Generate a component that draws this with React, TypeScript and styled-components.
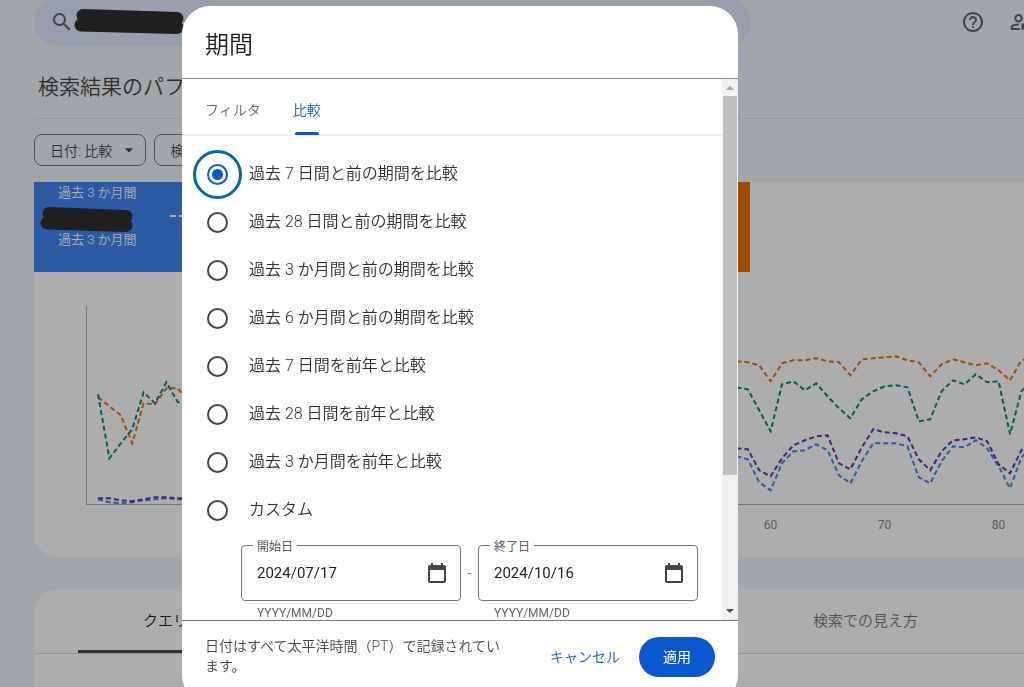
import React, { useState } from "react";
import styled, { createGlobalStyle } from "styled-components";
import { MdArrowDropDown, MdHelpOutline, MdSearch } from "react-icons/md";

const fontStack = `Roboto, "Noto Sans CJK JP", sans-serif`;

const GlobalStyle = createGlobalStyle`
  *, *::before, *::after { box-sizing: border-box; }
  body {
    margin: 0;
    background: #eff5f9;
    color: #1f1f1f;
    font-family: ${fontStack};
    font-weight: 350;
    overflow: hidden;
  }
  button, input { font: inherit; color: inherit; }
  h1, h2, p { margin: 0; font-weight: inherit; }
`;

/* ---------- Report page ---------- */

const Page = styled.div`
  height: 100vh;
  padding-left: 34px;
  overflow: hidden;
`;

const Header = styled.header`
  display: flex;
  justify-content: space-between;
  align-items: center;
  height: 48px;
  margin: -2px -8px 0 0;
`;

const SearchBar = styled.div`
  display: flex;
  align-items: center;
  width: 717px;
  height: 48px;
  padding-left: 16px;
  border-radius: 24px;
  background: #e1e9ff;
  color: #5f6368;
`;

const HeaderActions = styled.div`
  display: flex;
  gap: 23px;
`;

const IconButton = styled.button`
  display: flex;
  padding: 0;
  border: 0;
  background: none;
  color: #5f6368;
`;

const Title = styled.h1`
  height: 73px;
  padding: 25px 0 0 4px;
  border-bottom: 1px solid #dfe3e6;
  font-size: 21px;
  line-height: 32px;
  white-space: nowrap;
  color: #444746;
`;

const Chips = styled.div`
  display: flex;
  gap: 8px;
  padding: 15px 0 16px;
`;

const Chip = styled.button`
  display: flex;
  align-items: center;
  gap: 7px;
  height: 32px;
  padding: 0 6px 0 15px;
  border: 1px solid #747775;
  border-radius: 8px;
  background: none;
  font-size: 14px;
  white-space: nowrap;
  color: #444746;
`;

const ReportCard = styled.section`
  height: 375px;
  border-bottom-left-radius: 24px;
  background: #fff;
  overflow: hidden;
`;

const Metrics = styled.div`
  display: grid;
  grid-template-columns: repeat(4, 179px);
  height: 90px;
`;

const Metric = styled.div<{ $color: string }>`
  display: flex;
  align-items: flex-start;
  justify-content: space-between;
  padding: 0 19px 0 6px;
  background: ${(p) => p.$color};
  color: #fff;
  font-size: 13px;
  line-height: 20px;
`;

const MetricLabels = styled.div`
  display: flex;
  flex-direction: column;

  svg { margin-top: 4px; }
  span { padding-left: 18px; margin-top: 1px; }
  svg + span { margin-top: -4px; }
`;

const LegendDash = styled.span`
  width: 24px;
  margin-top: 33px;
  border-top: 2px dashed #fff;
`;

const DimensionCard = styled.section`
  height: 240px;
  margin-top: 32px;
  border-top-left-radius: 24px;
  background: #fff;
`;

const DimensionTabs = styled.div`
  display: grid;
  grid-template-columns: repeat(6, 175px);
  height: 65px;
  padding-left: 44px;
  border-bottom: 1px solid #dadce0;
  overflow: hidden;
`;

const DimensionTab = styled.button<{ $column: number; $active?: boolean }>`
  grid-column: ${(p) => p.$column};
  padding: 0;
  border: 0;
  border-bottom: 3px solid ${(p) => (p.$active ? "#444746" : "transparent")};
  background: none;
  font-size: 15px;
  color: ${(p) => (p.$active ? "#1f1f1f" : "#747775")};
`;

/* ---------- Dialog ---------- */

const Scrim = styled.div`
  position: fixed;
  inset: 0;
  display: flex;
  justify-content: center;
  align-items: flex-start;
  padding: 6px 104px 0 0;
  background: rgba(0, 0, 0, 0.32);
  overflow: hidden;
`;

const Dialog = styled.div`
  flex: none;
  width: 556px;
  max-width: 100%;
  border-radius: 28px;
  background: #fff;
  overflow: hidden;
`;

const DialogTitle = styled.h2`
  padding: 23px 23px 17px;
  border-bottom: 1px solid #8a8d8c;
  font-size: 24px;
  line-height: 32px;
  color: #1f1f1f;
`;

const DialogBody = styled.div`
  display: flex;
  height: 541px;
`;

const BodyContent = styled.div`
  flex: 1;
  min-width: 0;
  overflow: hidden;
`;

const Tabs = styled.div`
  display: flex;
  gap: 32px;
  height: 57px;
  padding: 0 23px;
  border-bottom: 2px solid #f1f1f1;
`;

const Tab = styled.button<{ $active?: boolean }>`
  display: flex;
  flex-direction: column;
  align-items: center;
  justify-content: space-between;
  height: 56px;
  padding: 19px 0 0;
  border: 0;
  background: none;
  font-size: 14px;
  line-height: 24px;
  color: ${(p) => (p.$active ? "#0b57d0" : "#5f6368")};

  &::after {
    content: "";
    width: 24px;
    height: 3px;
    border-radius: 2px 2px 0 0;
    background: ${(p) => (p.$active ? "#0b57d0" : "transparent")};
  }
`;

const Options = styled.div`
  display: flex;
  flex-direction: column;
  padding: 14px 0 0 11px;
`;

const Option = styled.label`
  display: flex;
  align-items: center;
  gap: 7px;
  height: 48px;
  font-size: 16px;
  line-height: 24px;
  color: #303030;
`;

const RadioHalo = styled.span<{ $on: boolean }>`
  display: flex;
  flex: none;
  align-items: center;
  justify-content: center;
  width: 49px;
  height: 49px;
  border: 3px solid ${(p) => (p.$on ? "#0668a1" : "transparent")};
  border-radius: 50%;
`;

const Radio = styled.input`
  display: flex;
  align-items: center;
  justify-content: center;
  appearance: none;
  width: 21px;
  height: 21px;
  margin: 0;
  border: 2px solid #444746;
  border-radius: 50%;
  outline: none;

  &:checked { border-color: #0b57d0; }
  &:checked::before {
    content: "";
    width: 11px;
    height: 11px;
    border-radius: 50%;
    background: #0b57d0;
  }
`;

const DateRange = styled.div`
  display: flex;
  padding: 11px 24px 0 59px;
  font-size: 14px;
  color: #444746;
`;

const RangeDash = styled.span`
  flex: 0 0 17px;
  line-height: 56px;
  text-align: center;
`;

const DateField = styled.div`
  position: relative;
  flex: none;
  width: 220px;
`;

const DateLabel = styled.label`
  position: absolute;
  top: -8px;
  left: 12px;
  padding: 0 4px;
  background: #fff;
  font-size: 12px;
  line-height: 20px;
`;

const DateBox = styled.div`
  display: flex;
  align-items: center;
  height: 56px;
  padding: 0 11px 0 15px;
  border: 1px solid #747775;
  border-radius: 4px;
`;

const DateInput = styled.input`
  flex: 1;
  min-width: 0;
  padding: 0;
  border: 0;
  outline: 0;
  background: none;
  font-size: 15px;
  font-weight: 400;
  color: #1f1f1f;
`;

const Hint = styled.p`
  padding: 4px 16px 0;
  font-size: 12px;
  line-height: 16px;
  font-weight: 400;
  color: #5f6368;
`;

const Scrollbar = styled.div`
  display: flex;
  flex-direction: column;
  align-items: center;
  flex: none;
  width: 16px;
  background: #f1f1f1;
`;

const ScrollArrow = styled.svg`
  flex: none;
  width: 16px;
  height: 17px;
`;

const Thumb = styled.div`
  width: 14px;
  height: 70%;
  margin-bottom: auto;
  background: #c1c1c1;
`;

const DialogFooter = styled.footer`
  display: flex;
  align-items: flex-start;
  padding: 16px 23px 26px;
  border-top: 1px solid #747775;
`;

const Note = styled.p`
  flex: 1;
  margin-top: -1px;
  padding-right: 20px;
  font-size: 14px;
  line-height: 20px;
  color: #444746;
`;

const FooterButton = styled.button<{ $filled?: boolean }>`
  height: 40px;
  padding: 0 ${(p) => (p.$filled ? 24 : 19)}px 2px;
  border: 0;
  border-radius: 20px;
  background: ${(p) => (p.$filled ? "#0b57d0" : "none")};
  color: ${(p) => (p.$filled ? "#fff" : "#0b57d0")};
  font-size: 14px;
  font-weight: ${(p) => (p.$filled ? 400 : 350)};
  white-space: nowrap;
`;

/* ---------- Chart data: y position per day ---------- */

type Run = { from: number; y: number[] };
type Series = { color: string; runs: Run[] };

const series: Series[] = [
  {
    color: "#e8710a",
    runs: [
      { from: 1, y: [397, 406, 415, 443, 403, 404, 388, 388, 402] },
      {
        from: 57,
        y: [361, 362, 365, 381, 363, 360, 360, 358, 361, 362, 375, 359, 358, 357, 356, 360, 362, 376, 364, 359, 362, 365, 363, 370, 380, 360, 358],
      },
    ],
  },
  {
    color: "#00897b",
    runs: [
      { from: 1, y: [394, 458, 443, 429, 392, 403, 382, 402, 401] },
      {
        from: 57,
        y: [387, 389, 410, 431, 384, 381, 390, 383, 396, 408, 418, 399, 391, 386, 385, 387, 421, 419, 391, 380, 384, 374, 382, 381, 434, 391, 380],
      },
    ],
  },
  {
    color: "#4285f4",
    runs: [
      { from: 1, y: [499, 502, 503, 502, 500, 499, 498, 499, 499] },
      {
        from: 57,
        y: [456, 459, 482, 490, 463, 451, 450, 444, 450, 475, 483, 461, 443, 443, 443, 446, 477, 483, 461, 446, 447, 440, 448, 466, 488, 457, 446],
      },
    ],
  },
  {
    color: "#5e35b1",
    runs: [
      { from: 1, y: [498, 498, 500, 501, 499, 497, 497, 498, 498] },
      {
        from: 57,
        y: [448, 449, 470, 476, 458, 445, 440, 436, 435, 463, 469, 447, 429, 432, 433, 436, 459, 470, 451, 440, 439, 437, 441, 464, 473, 450, 440],
      },
    ],
  },
];

const dayX = (day: number) => 98 + (day - 1) * 11.4;
const toPoints = (run: Run) =>
  run.y.map((y, i) => `${dayX(run.from + i).toFixed(1)},${y + 0.3}`).join(" ");

const Chart = () => (
  <svg width="1016" height="285" viewBox="34 272 1016 285" aria-hidden="true">
    <path d="M86.5 306V505" fill="none" stroke="#b0b0b0" />
    <path d="M86 504.5H1050" fill="none" stroke="#b0b0b0" />
    {series.map((s) =>
      s.runs.map((run) => (
        <polyline
          key={s.color + run.from}
          points={toPoints(run)}
          fill="none"
          stroke={s.color}
          strokeWidth="2"
          strokeDasharray="5 3"
        />
      ))
    )}
    {[60, 70, 80].map((day) => (
      <text
        key={day}
        x={dayX(day)}
        y="529"
        textAnchor="middle"
        fontFamily="Roboto, sans-serif"
        fontSize="12"
        fontWeight="400"
        fill="#80868b"
      >
        {day}
      </text>
    ))}
  </svg>
);

const CalendarIcon = () => (
  <svg width="24" height="24" viewBox="0 0 24 24" fill="#444746" aria-hidden="true">
    <path d="M19 4h-1V2h-2v2H8V2H6v2H5c-1.11 0-1.99.9-1.99 2L3 20c0 1.1.89 2 2 2h14c1.1 0 2-.9 2-2V6c0-1.1-.9-2-2-2zm0 16H5V9h14v11z" />
  </svg>
);

const UserSettingsIcon = () => (
  <svg width="24" height="24" viewBox="0 0 24 24" fill="none" stroke="currentColor" strokeWidth="2" aria-hidden="true">
    <circle cx="10.5" cy="8.3" r="3.2" />
    <path d="M12 19H3.7v-1.6c0-1.8 3-2.9 7-2.9" />
    <path d="M13.5 13.5h6v6h-6z" fill="currentColor" stroke="none" />
  </svg>
);

const Redaction = ({ width }: { width: number }) => (
  <svg width={width} height="27" viewBox={`0 0 ${width} 27`} aria-hidden="true">
    <path
      d={`M9 6.5L${width - 8} 9.5M7 16L${width - 8} 18.5`}
      stroke="#2f2f2f"
      strokeWidth="13"
      strokeLinecap="round"
    />
  </svg>
);

const options = [
  "過去 7 日間と前の期間を比較",
  "過去 28 日間と前の期間を比較",
  "過去 3 か月間と前の期間を比較",
  "過去 6 か月間と前の期間を比較",
  "過去 7 日間を前年と比較",
  "過去 28 日間を前年と比較",
  "過去 3 か月間を前年と比較",
  "カスタム",
];

const DateInputField = ({ id, label, value }: { id: string; label: string; value: string }) => (
  <DateField>
    <DateBox>
      <DateInput id={id} defaultValue={value} />
      <CalendarIcon />
    </DateBox>
    <DateLabel htmlFor={id}>{label}</DateLabel>
    <Hint>YYYY/MM/DD</Hint>
  </DateField>
);

export default function App() {
  const [selected, setSelected] = useState(0);

  return (
    <>
      <GlobalStyle />
      <Page>
        <Header>
          <SearchBar>
            <MdSearch size={24} />
            <Redaction width={111} />
          </SearchBar>
          <HeaderActions>
            <IconButton aria-label="ヘルプ">
              <MdHelpOutline size={24} />
            </IconButton>
            <IconButton aria-label="ユーザー管理">
              <UserSettingsIcon />
            </IconButton>
          </HeaderActions>
        </Header>
        <Title>検索結果のパフォーマンス</Title>
        <Chips>
          <Chip>
            日付: 比較
            <MdArrowDropDown size={20} />
          </Chip>
          <Chip>検索タイプ</Chip>
        </Chips>
        <ReportCard>
          <Metrics>
            <Metric $color="#4285f4">
              <MetricLabels>
                <span>過去 3 か月間</span>
                <Redaction width={94} />
                <span>過去 3 か月間</span>
              </MetricLabels>
              <LegendDash />
            </Metric>
            <Metric $color="#5e35b1" />
            <Metric $color="#00897b" />
            <Metric $color="#e8710a" />
          </Metrics>
          <Chart />
        </ReportCard>
        <DimensionCard>
          <DimensionTabs>
            <DimensionTab $column={1} $active>
              クエリ
            </DimensionTab>
            <DimensionTab $column={5}>検索での見え方</DimensionTab>
          </DimensionTabs>
        </DimensionCard>
      </Page>

      <Scrim>
        <Dialog role="dialog" aria-labelledby="dialog-title">
          <DialogTitle id="dialog-title">期間</DialogTitle>
          <DialogBody>
            <BodyContent>
              <Tabs>
                <Tab>フィルタ</Tab>
                <Tab $active>比較</Tab>
              </Tabs>
              <Options>
                {options.map((text, i) => (
                  <Option key={text}>
                    <RadioHalo $on={selected === i}>
                      <Radio
                        type="radio"
                        name="range"
                        checked={selected === i}
                        onChange={() => setSelected(i)}
                      />
                    </RadioHalo>
                    {text}
                  </Option>
                ))}
              </Options>
              <DateRange>
                <DateInputField id="start" label="開始日" value="2024/07/17" />
                <RangeDash>-</RangeDash>
                <DateInputField id="end" label="終了日" value="2024/10/16" />
              </DateRange>
            </BodyContent>
            <Scrollbar aria-hidden="true">
              <ScrollArrow viewBox="0 0 16 17">
                <path d="M4 11L8 7L12 11Z" fill="#a3a3a3" />
              </ScrollArrow>
              <Thumb />
              <ScrollArrow viewBox="0 0 16 17">
                <path d="M4 6L8 10L12 6Z" fill="#505050" />
              </ScrollArrow>
            </Scrollbar>
          </DialogBody>
          <DialogFooter>
            <Note>日付はすべて太平洋時間（PT）で記録されています。</Note>
            <FooterButton>キャンセル</FooterButton>
            <FooterButton $filled>適用</FooterButton>
          </DialogFooter>
        </Dialog>
      </Scrim>
    </>
  );
}
